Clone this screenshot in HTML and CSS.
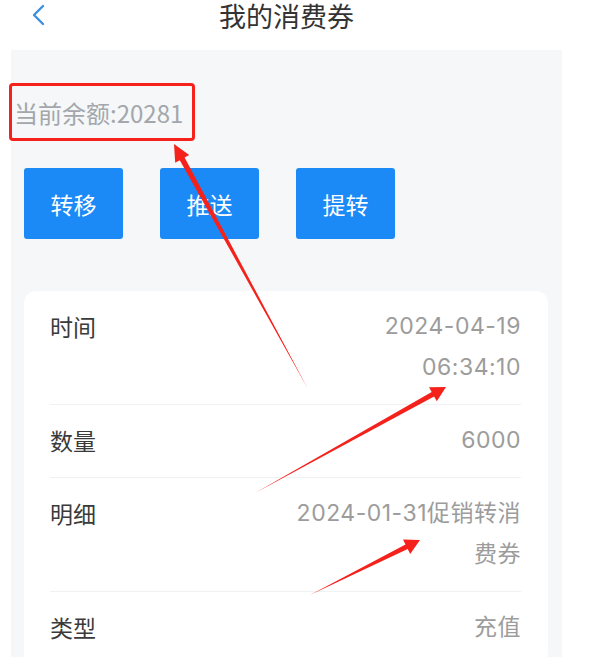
FILE: index.html
```html
<!DOCTYPE html>
<html lang="zh">
<head>
    <meta charset="utf-8"/>
    <title>我的消费券</title>
    <link rel="stylesheet" href="styles.css">
</head>
<body>
<div class="header">
    <svg class="back" width="20" height="30" viewBox="0 0 20 30">
        <polyline points="13,6 4,15 13,24" fill="none" stroke="#3d8fe0" stroke-width="2.4" stroke-linecap="round" stroke-linejoin="round"/>
    </svg>
    <span class="title">我的消费券</span>
</div>

<div class="panel">
    <div class="balance">当前余额:20281</div>

    <div class="actions">
        <span class="btn">转移</span>
        <span class="btn">推送</span>
        <span class="btn">提转</span>
    </div>

    <div class="card">
        <div class="row">
            <span class="label">时间</span>
            <span class="value">2024-04-19<br>06:34:10</span>
        </div>
        <div class="row">
            <span class="label">数量</span>
            <span class="value">6000</span>
        </div>
        <div class="row">
            <span class="label">明细</span>
            <span class="value">2024-01-31促销转消<br>费券</span>
        </div>
        <div class="row">
            <span class="label">类型</span>
            <span class="value">充值</span>
        </div>
    </div>
</div>

<!-- annotations drawn over the screenshot -->
<div class="mark-box"></div>
<svg class="marks" width="606" height="657" viewBox="0 0 606 657">
    <polygon fill="#f5211b" points="308,389 184.6,157.6 189.2,155.1 174,144 175.2,162.7 179.8,160.2"/>
    <polygon fill="#f5211b" points="255,493 431.7,392.1 429.0,387.3 446,387 436.8,401.3 434.1,396.5"/>
    <polygon fill="#f5211b" points="310,595 405.5,544.5 403.0,539.5 420,540 410.2,553.9 407.7,548.9"/>
</svg>
</body>
</html>
```

FILE: styles.css
```css
body{
    margin: 0;
    padding: 0;
    background: #fff;
    font-family: "Noto Sans CJK SC", "Noto Sans", sans-serif;
    position: relative;
    height: 657px;
    overflow: hidden;
}

.header {
    height: 50px;
    width: 551px;
    margin-left: 11px;
    position: relative;
    text-align: center;
}

.back {
    position: absolute;
    left: 19px;
    top: 0;
}

.title {
    display: block;
    padding-top: 1px;
    line-height: 30px;
    font-size: 27px;
    color: #333;
}

.panel {
    width: 537px;
    margin-left: 11px;
    padding: 48px 14px 0 0;
    background: #f5f7f9;
    height: 559px;
}

.balance {
    padding-left: 3px;
    font-size: 24px;
    line-height: 30px;
    color: #a3a7ab;
}

.actions {
    display: flex;
    gap: 37px;
    margin: 40px 0 0 13px;
}

.btn {
    width: 99px;
    height: 71px;
    display: flex;
    align-items: center;
    justify-content: center;
    background: #1b8af6;
    border-radius: 3px;
    color: #fff;
    font-size: 23px;
}

.card {
    margin: 52px 0 0 13px;
    background: #fff;
    border-radius: 12px;
    padding: 0 27px 0 26px;
}

.row {
    display: flex;
    justify-content: space-between;
    padding: 15px 0 16px;
    line-height: 41px;
    font-size: 23px;
    border-bottom: 1px solid #f0f1f3;
}

.label {
    color: #3a3a3a;
}

.value {
    color: #9c9c9c;
    text-align: right;
    letter-spacing: 0.5px;
    font-family: "Inter", "Noto Sans CJK SC", sans-serif;
}

.mark-box {
    position: absolute;
    left: 9px;
    top: 83px;
    width: 180px;
    height: 52px;
    border: 3px solid #f5211b;
    border-radius: 4px;
}

.marks {
    position: absolute;
    left: 0;
    top: 0;
}
```
